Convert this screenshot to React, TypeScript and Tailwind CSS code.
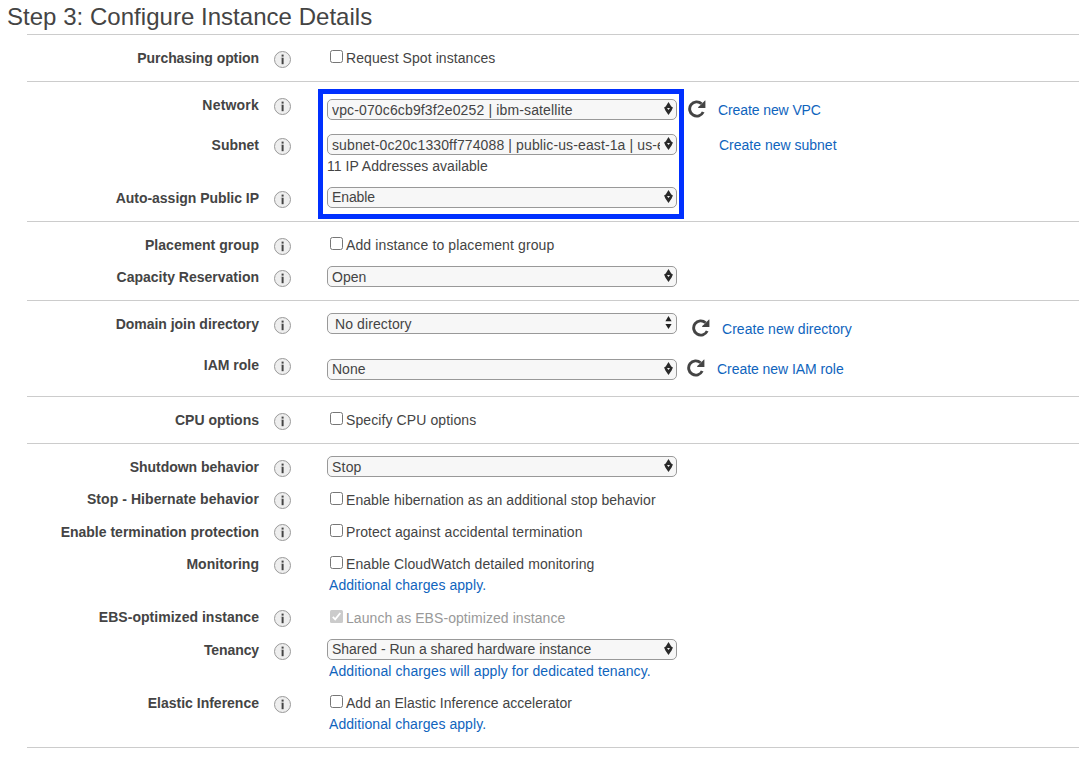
import type { ReactNode } from "react";

function InfoIcon({ className = "mt-[3px]" }: { className?: string }) {
  return (
    <svg className={`ml-[15px] block h-[17px] w-[17px] shrink-0 ${className}`} viewBox="0 0 17 17">
      <circle cx="8.5" cy="8.5" r="8" fill="#eeeeee" stroke="#999999" strokeWidth="1" />
      <rect x="7.6" y="3.6" width="2" height="2" fill="#444444" />
      <path d="M7.6 6.7h2v6.5h-2z" fill="#444444" />
      <path d="M6.8 6.7h.8v.9h-.8z" fill="#999999" />
    </svg>
  );
}

function RefreshIcon({ className }: { className: string }) {
  return (
    <svg className={`block h-[18px] w-[18px] shrink-0 ${className}`} viewBox="0 0 18 18">
      <path d="M15.2 12A7.1 7.1 0 1 1 13.6 3.8" fill="none" stroke="#444444" strokeWidth="2.9" />
      <path d="M17.4 0.6v7.4h-7.2v-.9l2.4-2.2 1.4-1.3 3-3z" fill="#444444" />
    </svg>
  );
}

function Arrows({ plain }: { plain?: boolean }) {
  return plain ? (
    <svg className="block h-[13px] w-[9px] shrink-0" viewBox="0 0 9 13">
      <path d="M4.5 0 7.6 5.2H1.4zM4.5 13 1.4 8h6.2z" fill="#222222" />
    </svg>
  ) : (
    <svg className="block h-[13px] w-[9px] shrink-0" viewBox="0 0 9 13">
      <path d="M4.5 0 7.3 4.6 8.9 5.6 7.6 8.4 4.5 13 1.4 8.4 .1 5.6 1.7 4.6z" fill="#2a2a2a" />
      <path d="M3 6h3L4.5 7.9z" fill="#f7f7f7" />
    </svg>
  );
}

function Select({
  children,
  plain,
  low,
  className = "",
}: {
  children: ReactNode;
  plain?: boolean;
  low?: boolean;
  className?: string;
}) {
  return (
    <div
      className={`flex h-[21px] w-[350px] shrink-0 items-start rounded-[5px] border border-[#999999] bg-[#f7f7f7] pr-[3px] pl-1 ${className}`}
    >
      <div
        className={`w-[328px] overflow-hidden whitespace-nowrap ${low ? "h-[19px] leading-[21px]" : "leading-[19px]"} ${plain ? "pl-[3px]" : ""}`}
      >
        {children}
      </div>
      <div className="mt-[2px] ml-auto">
        <Arrows plain={plain} />
      </div>
    </div>
  );
}

function Check({ children, disabled, className = "" }: { children: ReactNode; disabled?: boolean; className?: string }) {
  return (
    <div className={`flex h-5 items-start pl-[3px] ${className}`}>
      <div
        className={`mt-[2px] h-[13px] w-[13px] shrink-0 ${disabled ? "rounded-[1.5px] bg-[#cbcbcb]" : "rounded-[2.5px] border border-[#767676] bg-white"}`}
      >
        {disabled && (
          <svg className="block h-[13px] w-[13px]" viewBox="0 0 13 13">
            <path d="M2.8 6.9 5.2 9.4 10.3 3" fill="none" stroke="#ffffff" strokeWidth="1.8" />
          </svg>
        )}
      </div>
      <div className={`ml-[3px] whitespace-nowrap ${disabled ? "text-[#999999]" : ""}`}>{children}</div>
    </div>
  );
}

function Link({ children, className = "" }: { children: ReactNode; className?: string }) {
  return (
    <a href="#" className={`block whitespace-nowrap text-[#0f64bd] ${className}`}>
      {children}
    </a>
  );
}

function Row({
  label,
  height,
  labelClass = "",
  iconClass,
  children,
}: {
  label: string;
  height: string;
  labelClass?: string;
  iconClass?: string;
  children: ReactNode;
}) {
  return (
    <div className={`flex items-start ${height}`}>
      <div className={`w-[232px] shrink-0 text-right font-bold whitespace-nowrap ${labelClass}`}>{label}</div>
      <InfoIcon className={iconClass} />
      <div className="ml-[36px]">{children}</div>
    </div>
  );
}

function Section({ children }: { children: ReactNode }) {
  return <section className="border-t border-[#cccccc] pt-[13px]">{children}</section>;
}

export default function App() {
  return (
    <main className="relative h-[758px] w-[1086px] overflow-hidden bg-white font-['Liberation_Sans',Arial,sans-serif] text-[14px] leading-5 text-[#444444]">
      <h1 className="h-[34px] pl-[7px] text-[24px] leading-[34px] font-normal tracking-[0.03px] whitespace-nowrap">
        Step 3: Configure Instance Details
      </h1>
      <div className="mr-[7px] ml-[27px] border-b border-[#cccccc]">
        <Section>
          <Row label="Purchasing option" height="h-[33px]" labelClass="tracking-[-0.07px]">
            <Check className="tracking-[0.07px]">Request Spot instances</Check>
          </Row>
        </Section>
        <Section>
          <Row label="Network" height="h-[40px]" labelClass="tracking-[0.2px]">
            <div className="flex items-start">
              <Select low className="mt-1 tracking-[0.14px]">vpc-070c6cb9f3f2e0252 | ibm-satellite</Select>
              <RefreshIcon className="mt-[5px] ml-[11px]" />
              <Link className="mt-[5px] ml-3 tracking-[-0.1px]">Create new VPC</Link>
            </div>
          </Row>
          <Row label="Subnet" height="h-[53px]">
            <div className="flex items-start">
              <Select low className="-mt-px tracking-[0.12px]">
                subnet-0c20c1330ff774088 | public-us-east-1a | us-east-1a
              </Select>
              <Link className="ml-[42px]">Create new subnet</Link>
            </div>
            <p className="mt-px tracking-[0.04px]">11 IP Addresses available</p>
          </Row>
          <Row label="Auto-assign Public IP" height="h-[33px]" labelClass="tracking-[-0.03px]">
            <Select className="-mt-px tracking-[-0.1px]">Enable</Select>
          </Row>
        </Section>
        <Section>
          <Row label="Placement group" height="h-[32px]" labelClass="tracking-[0.03px]">
            <Check className="tracking-[0.12px]">Add instance to placement group</Check>
          </Row>
          <Row label="Capacity Reservation" height="h-[33px]">
            <Select low className="-mt-px">Open</Select>
          </Row>
        </Section>
        <Section>
          <Row label="Domain join directory" height="h-[41px]" labelClass="tracking-[-0.03px]">
            <div className="flex items-start">
              <Select plain low className="-mt-px tracking-[0.1px]">No directory</Select>
              <RefreshIcon className="mt-[5px] ml-[15px]" />
              <Link className="mt-[5px] ml-3 tracking-[0.03px]">Create new directory</Link>
            </div>
          </Row>
          <Row label="IAM role" height="h-[41px]">
            <div className="flex items-start">
              <Select className="mt-1">None</Select>
              <RefreshIcon className="mt-1 ml-[10px]" />
              <Link className="mt-1 ml-3 tracking-[-0.05px]">Create new IAM role</Link>
            </div>
          </Row>
        </Section>
        <Section>
          <Row label="CPU options" height="h-[33px]">
            <Check className="tracking-[0.1px]">Specify CPU options</Check>
          </Row>
        </Section>
        <Section>
          <Row label="Shutdown behavior" height="h-[32px]" labelClass="tracking-[-0.04px]">
            <Select low className="-mt-px tracking-[0.2px]">Stop</Select>
          </Row>
          <Row label="Stop - Hibernate behavior" height="h-[33px]" labelClass="tracking-[0.07px]">
            <Check className="mt-px tracking-[0.06px]">Enable hibernation as an additional stop behavior</Check>
          </Row>
          <Row label="Enable termination protection" height="h-[32px]" iconClass="mt-[2px]">
            <Check className="tracking-[0.08px]">Protect against accidental termination</Check>
          </Row>
          <Row label="Monitoring" height="h-[53px]" labelClass="tracking-[0.03px]">
            <Check className="tracking-[0.08px]">Enable CloudWatch detailed monitoring</Check>
            <Link className="mt-px ml-[2px] tracking-[0.07px]">Additional charges apply.</Link>
          </Row>
          <Row label="EBS-optimized instance" height="h-[33px]" labelClass="tracking-[0.03px]">
            <Check disabled className="mt-px tracking-[0.07px]">Launch as EBS-optimized instance</Check>
          </Row>
          <Row label="Tenancy" height="h-[53px]" labelClass="tracking-[-0.1px]">
            <Select className="-mt-px tracking-[-0.02px]">Shared - Run a shared hardware instance</Select>
            <Link className="mt-px ml-[2px] tracking-[0.1px]">Additional charges will apply for dedicated tenancy.</Link>
          </Row>
          <Row label="Elastic Inference" height="h-[54px]">
            <Check className="tracking-[0.03px]">Add an Elastic Inference accelerator</Check>
            <Link className="mt-px ml-[2px] tracking-[0.07px]">Additional charges apply.</Link>
          </Row>
        </Section>
      </div>
      <div className="pointer-events-none absolute top-[89px] left-[318px] h-[130px] w-[366px] border-[5px] border-[#0030ff]" />
    </main>
  );
}
